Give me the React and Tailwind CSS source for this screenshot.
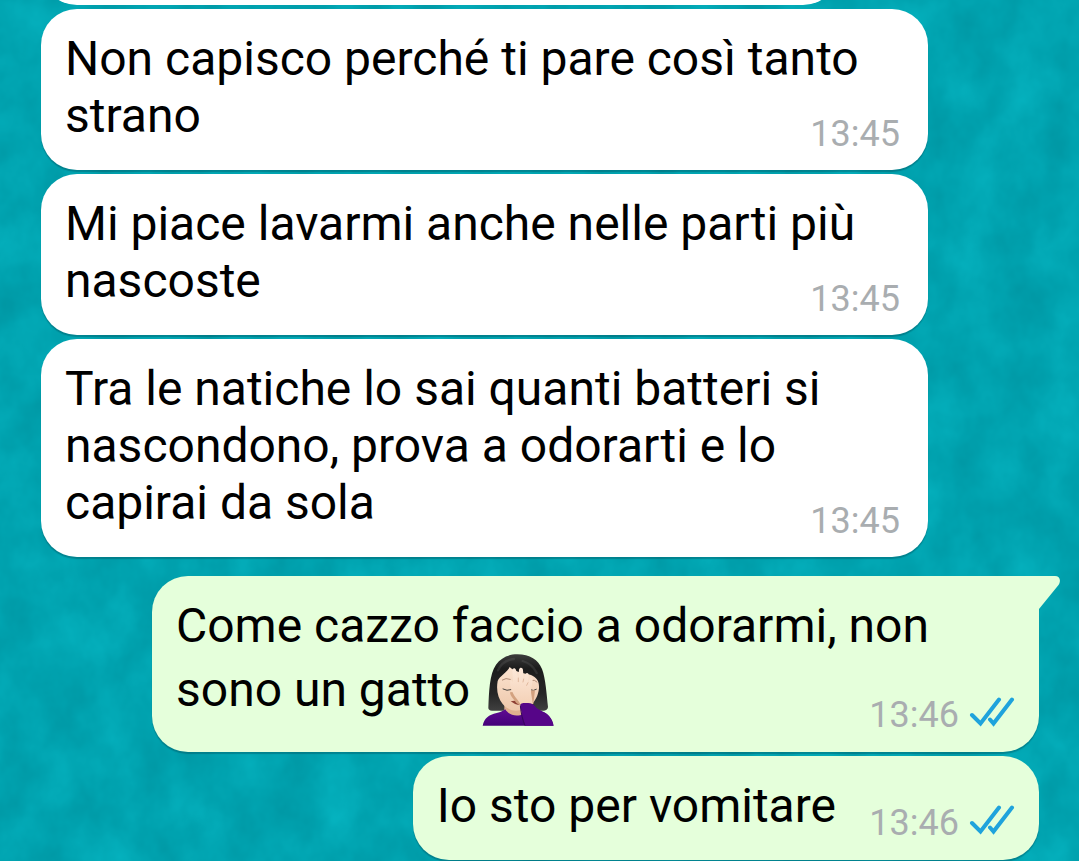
import React from "react";

function Wallpaper() {
  return (
    <svg aria-hidden="true" className="absolute inset-0 -z-10 h-full w-full">
      <defs>
        <filter id="felt" x="0" y="0" width="100%" height="100%" colorInterpolationFilters="sRGB">
          <feTurbulence type="fractalNoise" baseFrequency="0.022 0.018" numOctaves="4" seed="8" />
          <feColorMatrix
            values="0.04 0 0 0 -0.018
                    0.13 0 0 0 0.575
                    0.13 0 0 0 0.625
                    0 0 0 0 1"
          />
        </filter>
      </defs>
      <rect width="100%" height="100%" filter="url(#felt)" />
    </svg>
  );
}

function Ticks() {
  return (
    <svg
      role="img"
      aria-label="Letto"
      viewBox="0 0 46 36"
      className="h-9 w-[46px]"
      fill="none"
      stroke="#1fa3dc"
      strokeWidth="4"
      strokeLinejoin="miter"
      strokeLinecap="round"
    >
      <path d="M3 18 11.500 26.500 30 2.500" />
      <path d="M21 22.500 24.500 26.500 43 2.500" />
    </svg>
  );
}

function Tail() {
  return (
    <svg
      aria-hidden="true"
      viewBox="0 0 22 34"
      className="absolute top-0 left-full h-[34px] w-[22px] fill-[#e5ffdb]"
    >
      <path d="M0 0H16C20.5 0 22.5 4.500 19.500 9L0 33Z" />
    </svg>
  );
}

function Facepalm() {
  return (
    <svg
      role="img"
      aria-label="Donna con la mano sul viso"
      viewBox="36 27 216 216"
      className="inline-block size-[72px] align-[-20px]"
    >
      <defs>
        <linearGradient id="hair" x1="0" y1="0" x2="0" y2="1">
          <stop offset="0" stopColor="#3c3c3c" />
          <stop offset="0.25" stopColor="#1c1c1c" />
          <stop offset="0.7" stopColor="#262626" />
          <stop offset="1" stopColor="#404040" />
        </linearGradient>
        <linearGradient id="skin" x1="0" y1="0" x2="0" y2="1">
          <stop offset="0" stopColor="#fbe3d0" />
          <stop offset="1" stopColor="#eec8ab" />
        </linearGradient>
        <linearGradient id="hand" x1="0" y1="0" x2="0" y2="1">
          <stop offset="0" stopColor="#fde9da" />
          <stop offset="1" stopColor="#f3cfb4" />
        </linearGradient>
        <linearGradient id="shirt" x1="0" y1="0" x2="0" y2="1">
          <stop offset="0" stopColor="#5f0b92" />
          <stop offset="1" stopColor="#45007a" />
        </linearGradient>
      </defs>
      <path
        fill="url(#hair)"
        d="M55 188C57 140 58 88 78 59C93 38 115 28 142 28C180 28 205 45 216 72C227 100 230 150 234 186Q233 196 222 197H66Q55 196 55 188Z"
      />
      <path fill="#dfb08e" d="M103 172H160V206C150 219 117 219 103 204Z" />
      <path
        fill="url(#skin)"
        d="M119 66C112 82 88 94 83 108C78 135 84 160 98 177C112 192 124 197 138 197C170 197 202 175 207 130C208 108 200 98 183 90C162 84 134 82 119 66Z"
      />
      <path fill="none" stroke="#777" strokeOpacity=".22" strokeWidth="7" strokeLinecap="round" d="M84 76C94 54 112 44 132 42M158 48C178 54 192 66 200 84" />
      <path fill="none" stroke="#a27c66" strokeWidth="2.500" strokeLinecap="round" d="M97 105Q107 97 121 103M184 106Q194 103 201 111" />
      <path fill="none" stroke="#4a4540" strokeWidth="3" strokeLinecap="round" d="M99 132Q111 139 123 134M183 135Q190 139 199 133" />
      <path fill="#8d3f33" d="M122 169Q136 165 150 171L146 180Q133 178 122 169Z" />
      <path
        fill="url(#shirt)"
        d="M38 242C43 220 56 209 80 204C92 202 101 197 106 193C116 211 142 217 160 206L210 199C234 203 247 220 251 242Z"
      />
      <path
        fill="#d3a17f"
        d="M120 142C120 153 132 162 138 173L154 184L190 177L195 136Z"
      />
      <path
        fill="url(#hand)"
        d="M126 138C121 126 118 112 122 104L129 111L127 76C127 68 136 67 138 75L145 99L147 74C149 66 158 66 159 75L161 102L166 88C170 81 177 84 176 92L174 113L179 101C184 94 190 98 188 106L183 133C182 146 187 160 188 177L156 186C150 170 133 157 126 138Z"
      />
      <path fill="none" stroke="#d3a586" strokeWidth="2" strokeLinecap="round" d="M145 99V110M161 102 159 111M174 113L170 121" />
      <path
        fill="#560588"
        d="M151 181C151 174 161 174 171 174C182 173 191 177 195 184C203 197 230 200 238 215C246 225 249 234 250 242H166C161 221 153 204 151 181Z"
      />
      <path fill="none" stroke="#37035c" strokeWidth="3" d="M151 182C153 205 158 225 165 242" />
    </svg>
  );
}

function Message({ time, outgoing = false, tail = false, children }) {
  const side = outgoing ? "self-end bg-[#e5ffdb]" : "self-start bg-white";
  const corners = tail ? "rounded-l-[36px] rounded-br-[36px]" : "rounded-[36px]";
  const stamp = outgoing ? "right-6 bottom-[19px]" : "right-7 bottom-[18px]";
  return (
    <article
      className={`relative max-w-[887px] px-6 pt-[21px] pb-[26px] shadow-[0_2px_1px_rgba(0,70,80,0.35)] ${side} ${corners}`}
    >
      {tail && <Tail />}
      <p className="text-[48px] leading-[57px] text-black">
        {children}
        <span
          aria-hidden="true"
          className={outgoing ? "inline-block w-[179px]" : "inline-block w-[120px]"}
        />
      </p>
      <div
        className={`absolute flex items-center gap-[10px] text-[36px] leading-9 text-[#a9adb0] ${stamp}`}
      >
        <time>{time}</time>
        {outgoing && <Ticks />}
      </div>
    </article>
  );
}

export default function App() {
  return (
    <main className="relative isolate flex min-h-screen flex-col gap-1 overflow-hidden bg-[#02a5b0] pr-10 pb-px pl-[41px] font-[Roboto,sans-serif]">
      <Wallpaper />
      <div className="h-[5px] w-4/5 overflow-hidden">
        <div className="-mt-[95px] h-[100px] rounded-[36px] bg-white" />
      </div>
      <Message time="13:45">Non capisco perché ti pare così tanto strano</Message>
      <Message time="13:45">Mi piace lavarmi anche nelle parti più nascoste</Message>
      <Message time="13:45">
        Tra le natiche lo sai quanti batteri si nascondono, prova a odorarti e lo capirai da sola
      </Message>
      <div className="mt-[15px] flex flex-col gap-1">
        <Message time="13:46" outgoing tail>
          Come cazzo faccio a odorarmi, non sono un gatto <Facepalm />
        </Message>
        <Message time="13:46" outgoing>
          Io sto per vomitare
        </Message>
      </div>
    </main>
  );
}
